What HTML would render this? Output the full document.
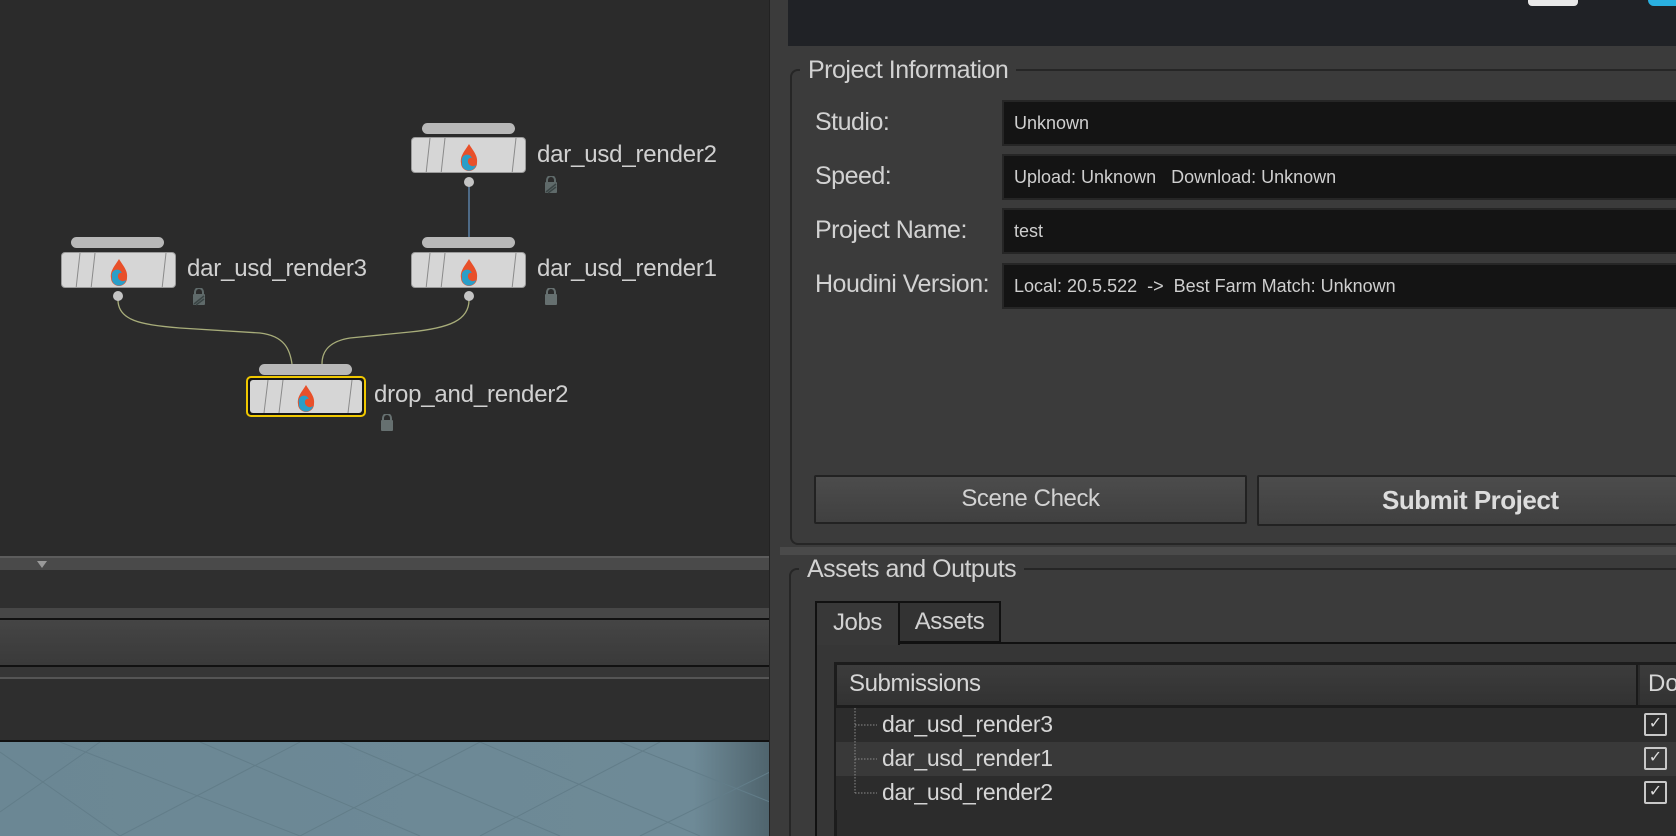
<!DOCTYPE html>
<html><head><meta charset="utf-8"><style>
*{margin:0;padding:0;box-sizing:border-box}
html,body{width:1676px;height:836px;overflow:hidden}
body{background:#2b2b2b;font-family:"Liberation Sans",sans-serif;position:relative}
.a{position:absolute}
.lbl{color:#d0d0d0;font-size:24px;letter-spacing:-0.2px;white-space:nowrap}
.tb{position:absolute;height:11px;background:#b8b8b8;border-radius:6px}
.nb{position:absolute;height:36px;background:#d6d6d6;border:1px solid #9a9a9a;border-radius:4px;overflow:hidden}
.dot{position:absolute;width:10px;height:10px;border-radius:50%;background:#c4c4c4}
.f{position:absolute;left:1002px;width:674px;height:46px;background:#141414;border:2px solid #262626;border-right:none;color:#cfcfcf;font-size:18px;padding-left:10px;line-height:42px;white-space:nowrap}
.fl{position:absolute;left:815px;color:#d2d2d2;font-size:25px;letter-spacing:-0.5px;white-space:nowrap}
.row{position:absolute;left:836px;width:840px;height:34px;color:#d6d6d6;font-size:23px;letter-spacing:-0.3px;line-height:32px;padding-left:46px}
.cb{position:absolute;left:808px;width:23px;height:23px;border:2px solid #c8c8c8;border-radius:2px;top:5px;color:#ddd;font-size:16px;line-height:18px;text-align:center;padding:0;letter-spacing:0}
</style></head><body>
<svg class="a" style="left:0;top:0" width="770" height="557">
<path d="M118 300 C118 320,140 325,180 328 L260 333 C285 336,290 350,292 364" stroke="#a8ad7a" stroke-width="1.3" fill="none"/>
<path d="M469 300 C469 320,450 328,410 332 L350 338 C325 342,322 355,322 364" stroke="#a8ad7a" stroke-width="1.3" fill="none"/>
<line x1="469" y1="185" x2="469" y2="237" stroke="#5b7fa5" stroke-width="1.5"/>
</svg>
<svg class="a" style="left:544px;top:176px" width="14" height="18"><rect x="1" y="6" width="12" height="11" rx="1" fill="#5f6a6a"/><path d="M3 7V4a4 4 0 0 1 8 0v3" stroke="#5f6a6a" stroke-width="2" fill="none"/><path d="M2 16 L12 8 M4 17 L12 11" stroke="#3a4444" stroke-width="1.5"/></svg>
<svg class="a" style="left:544px;top:288px" width="14" height="18"><rect x="1" y="6" width="12" height="11" rx="1" fill="#667070"/><path d="M3 7V4a4 4 0 0 1 8 0v3" stroke="#667070" stroke-width="2" fill="none"/></svg>
<svg class="a" style="left:192px;top:288px" width="14" height="18"><rect x="1" y="6" width="12" height="11" rx="1" fill="#5f6a6a"/><path d="M3 7V4a4 4 0 0 1 8 0v3" stroke="#5f6a6a" stroke-width="2" fill="none"/><path d="M2 16 L12 8 M4 17 L12 11" stroke="#3a4444" stroke-width="1.5"/></svg>
<svg class="a" style="left:380px;top:414px" width="14" height="18"><rect x="1" y="6" width="12" height="11" rx="1" fill="#667070"/><path d="M3 7V4a4 4 0 0 1 8 0v3" stroke="#667070" stroke-width="2" fill="none"/></svg>

<div class="tb" style="left:422px;top:123px;width:93px"></div>
<div class="nb" style="left:411px;top:137px;width:115px"><svg width="115" height="36"><path d="M14 36L18 0M29 36L33 0M100 36L104 0" stroke="#8a8a8a"/><path d="M57 6 C52 14,48 18,49 25 A8 8 0 0 0 65 25 C66 18,62 14,57 6Z" fill="#e8502a"/><path d="M50 24 A7 7 0 0 0 64 27 A5 5 0 0 1 56 22 A3 3 0 0 1 60 20 A5 5 0 0 0 50 24Z" fill="#2a9ec8"/></svg></div>
<div class="dot" style="left:464px;top:177px"></div>
<div class="lbl a" style="left:537px;top:141px">dar_usd_render2</div>

<div class="tb" style="left:422px;top:237px;width:93px"></div>
<div class="nb" style="left:411px;top:252px;width:115px"><svg width="115" height="36"><path d="M14 36L18 0M29 36L33 0M100 36L104 0" stroke="#8a8a8a"/><path d="M57 6 C52 14,48 18,49 25 A8 8 0 0 0 65 25 C66 18,62 14,57 6Z" fill="#e8502a"/><path d="M50 24 A7 7 0 0 0 64 27 A5 5 0 0 1 56 22 A3 3 0 0 1 60 20 A5 5 0 0 0 50 24Z" fill="#2a9ec8"/></svg></div>
<div class="dot" style="left:464px;top:291px"></div>
<div class="lbl a" style="left:537px;top:255px">dar_usd_render1</div>

<div class="tb" style="left:71px;top:237px;width:93px"></div>
<div class="nb" style="left:61px;top:252px;width:115px"><svg width="115" height="36"><path d="M14 36L18 0M29 36L33 0M100 36L104 0" stroke="#8a8a8a"/><path d="M57 6 C52 14,48 18,49 25 A8 8 0 0 0 65 25 C66 18,62 14,57 6Z" fill="#e8502a"/><path d="M50 24 A7 7 0 0 0 64 27 A5 5 0 0 1 56 22 A3 3 0 0 1 60 20 A5 5 0 0 0 50 24Z" fill="#2a9ec8"/></svg></div>
<div class="dot" style="left:113px;top:291px"></div>
<div class="lbl a" style="left:187px;top:255px">dar_usd_render3</div>

<div class="tb" style="left:259px;top:364px;width:93px"></div>
<div class="a" style="left:246px;top:376px;width:120px;height:41px;border:2px solid #f0c800;border-radius:5px;background:#151515;padding:2px"><div style="width:112px;height:33px;background:#d6d6d6;border-radius:3px;overflow:hidden"><svg width="112" height="33"><path d="M14 33L18 0M29 33L33 0M98 33L102 0" stroke="#8a8a8a"/><path d="M56 5 C51 13,47 17,48 24 A8 8 0 0 0 64 24 C65 17,61 13,56 5Z" fill="#e8502a"/><path d="M49 23 A7 7 0 0 0 63 26 A5 5 0 0 1 55 21 A3 3 0 0 1 59 19 A5 5 0 0 0 49 23Z" fill="#2a9ec8"/></svg></div></div>
<div class="lbl a" style="left:374px;top:381px">drop_and_render2</div>

<div class="a" style="left:0;top:556px;width:770px;height:2px;background:#5c5c5c"></div>
<div class="a" style="left:0;top:558px;width:770px;height:12px;background:#4a4a4a"></div>
<div class="a" style="left:37px;top:561px;width:0;height:0;border-left:5px solid transparent;border-right:5px solid transparent;border-top:7px solid #9a9a9a"></div>
<div class="a" style="left:0;top:570px;width:770px;height:38px;background:#2f2f2f"></div>
<div class="a" style="left:0;top:608px;width:770px;height:10px;background:#474747"></div>
<div class="a" style="left:0;top:618px;width:770px;height:2px;background:#111"></div>
<div class="a" style="left:0;top:620px;width:770px;height:45px;background:linear-gradient(#454545,#3a3a3a)"></div>
<div class="a" style="left:0;top:665px;width:770px;height:2px;background:#111"></div>
<div class="a" style="left:0;top:667px;width:770px;height:10px;background:#363636"></div>
<div class="a" style="left:0;top:677px;width:770px;height:2px;background:#555"></div>
<div class="a" style="left:0;top:679px;width:770px;height:61px;background:#2e2e2e"></div>
<div class="a" style="left:0;top:740px;width:770px;height:2px;background:#111"></div>
<div class="a" style="left:0;top:742px;width:770px;height:94px;background:linear-gradient(90deg,#6b8794,#6e8a97 90%,#4f646d)"></div>
<svg class="a" style="left:0;top:742px" width="770" height="94"><g stroke="#627d89" stroke-width="1"><path d="M0 10L120 94M60 0L300 94M200 0L420 94M340 0L560 94M480 0L700 94M620 0L770 60M0 70L100 0M120 94L300 0M300 94L480 0M480 94L660 0M640 94L770 30"/></g></svg>

<div class="a" style="left:769px;top:0;width:907px;height:836px;background:#3b3b3b;border-left:1px solid #222"></div>
<div class="a" style="left:788px;top:0;width:888px;height:46px;background:#202226"></div>
<div class="a" style="left:1528px;top:0;width:50px;height:6px;background:#e8e8e8;border-radius:0 0 4px 4px"></div>
<div class="a" style="left:1648px;top:0;width:28px;height:6px;background:#2ab0e0;border-radius:0 0 0 6px"></div>

<div class="a" style="left:790px;top:69px;width:886px;height:476px;border:2px solid #262626;border-right:none;border-radius:8px 0 0 8px"></div>
<div class="a" style="left:800px;top:56px;background:#3b3b3b;padding:0 8px;color:#d2d2d2;font-size:25px;letter-spacing:-0.5px">Project Information</div>

<div class="fl" style="top:108px">Studio:</div>
<div class="f" style="top:100px">Unknown</div>
<div class="fl" style="top:162px">Speed:</div>
<div class="f" style="top:154px">Upload: Unknown&nbsp;&nbsp;&nbsp;Download: Unknown</div>
<div class="fl" style="top:216px">Project Name:</div>
<div class="f" style="top:208px">test</div>
<div class="fl" style="top:270px">Houdini Version:</div>
<div class="f" style="top:263px">Local: 20.5.522&nbsp;&nbsp;-&gt;&nbsp;&nbsp;Best Farm Match: Unknown</div>

<div class="a" style="left:814px;top:475px;width:433px;height:49px;background:linear-gradient(#4c4c4c,#404040);border:2px solid #222;border-radius:2px;color:#d2d2d2;font-size:24px;letter-spacing:-0.4px;text-align:center;line-height:44px">Scene Check</div>
<div class="a" style="left:1257px;top:475px;width:419px;height:51px;background:linear-gradient(#4c4c4c,#404040);border:2px solid #222;border-right:none;border-radius:2px;color:#dcdcdc;font-size:26px;font-weight:bold;letter-spacing:-0.5px;line-height:46px;padding-left:123px;white-space:nowrap">Submit Project</div>

<div class="a" style="left:780px;top:547px;width:896px;height:8px;background:#4a4a4a"></div>
<div class="a" style="left:789px;top:568px;width:887px;height:280px;border:2px solid #262626;border-right:none;border-radius:8px 0 0 0"></div>
<div class="a" style="left:799px;top:555px;background:#3b3b3b;padding:0 8px;color:#d2d2d2;font-size:25px;letter-spacing:-0.5px">Assets and Outputs</div>

<div class="a" style="left:815px;top:642px;width:861px;height:200px;border:2px solid #111;border-right:none;background:#363636"></div>
<div class="a" style="left:815px;top:601px;width:85px;height:44px;border:2px solid #111;border-bottom:none;background:#383838;color:#d2d2d2;font-size:24px;letter-spacing:-0.4px;text-align:center;line-height:40px">Jobs</div>
<div class="a" style="left:898px;top:601px;width:103px;height:42px;border:2px solid #111;background:#333;color:#d2d2d2;font-size:24px;letter-spacing:-0.4px;text-align:center;line-height:38px">Assets</div>

<div class="a" style="left:834px;top:662px;width:842px;height:180px;background:#2c2c2c;border:3px solid #1c1c1c;border-right:none"></div>
<div class="a" style="left:837px;top:665px;width:801px;height:40px;background:linear-gradient(#3c3c3c,#323232);border-right:2px solid #1a1a1a;color:#d6d6d6;font-size:24px;letter-spacing:-0.4px;line-height:38px;padding-left:12px">Submissions</div>
<div class="a" style="left:1640px;top:665px;width:36px;height:40px;background:linear-gradient(#3c3c3c,#323232);color:#d6d6d6;font-size:24px;line-height:38px;padding-left:8px;overflow:hidden">Do</div>
<div class="a" style="left:837px;top:705px;width:839px;height:3px;background:#1c1c1c"></div>

<div class="row" style="top:708px;background:#2c2c2c">dar_usd_render3<div class="cb">✓</div></div>
<div class="row" style="top:742px;background:#393939">dar_usd_render1<div class="cb">✓</div></div>
<div class="row" style="top:776px;background:#2c2c2c">dar_usd_render2<div class="cb">✓</div></div>
<svg class="a" style="left:850px;top:708px" width="32" height="90"><path d="M5 0V85M5 17H27M5 51H27M5 85H27" stroke="#8a8a8a" stroke-dasharray="1.5 1.5"/></svg>
</body></html>
